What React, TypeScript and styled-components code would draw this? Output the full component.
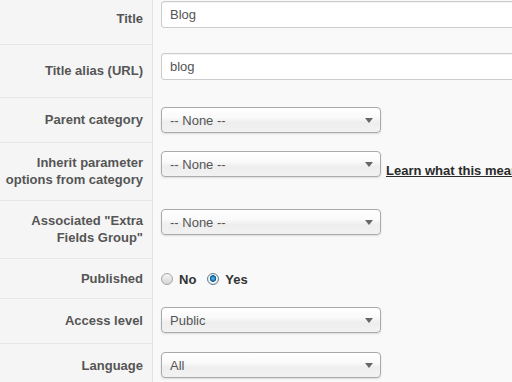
import styled, { createGlobalStyle } from 'styled-components';

const GlobalStyle = createGlobalStyle`
  html, body {
    margin: 0;
    padding: 0;
    background: #f9f9f9;
    overflow: hidden;
    font-family: "Liberation Sans", Arial, sans-serif;
  }
`;

const Table = styled.div`
  width: 512px;
  margin-top: -7px;
  overflow: hidden;
`;

const Row = styled.div<{ $h: number }>`
  display: grid;
  grid-template-columns: 153px 1fr;
  height: ${(p) => p.$h}px;
`;

const Label = styled.div`
  box-sizing: border-box;
  display: flex;
  align-items: center;
  justify-content: flex-end;
  text-align: right;
  padding: 0 9px 1px 0;
  background: #f5f5f5;
  border-right: 1px solid #e3e3e3;
  border-bottom: 1px solid #e6e6e6;
  color: #555;
  font-size: 13px;
  font-weight: bold;
  line-height: 17px;
`;

const Value = styled.div`
  display: flex;
  align-items: flex-start;
  padding: 8px 0 0 8px;
  min-width: 0;
  white-space: nowrap;
`;

const TextInput = styled.div`
  box-sizing: border-box;
  flex: 0 0 420px;
  height: 27px;
  padding: 0 8px;
  display: flex;
  align-items: center;
  background: #fff;
  border: 1px solid #ccc;
  border-radius: 3px;
  box-shadow: inset 0 1px 1px rgba(0, 0, 0, 0.05);
  color: #555;
  font-size: 13px;
`;

const Select = styled.div<{ $top?: number }>`
  position: relative;
  box-sizing: border-box;
  flex: 0 0 220px;
  height: 26px;
  margin-top: ${(p) => p.$top ?? 0}px;
  padding: 0 8px;
  display: flex;
  align-items: center;
  background: linear-gradient(#ffffff 0%, #fafafa 40%, #eeeeee 60%, #f2f2f2 100%);
  border: 1px solid #aaa;
  border-radius: 4px;
  box-shadow: 0 1px 2px rgba(0, 0, 0, 0.12);
  color: #555;
  font-size: 13px;
`;

const Arrow = styled.span`
  position: absolute;
  right: 7px;
  top: 10px;
  width: 0;
  height: 0;
  border-left: 4px solid transparent;
  border-right: 4px solid transparent;
  border-top: 5px solid #666;
`;

const HelpLink = styled.a`
  margin: 11px 0 0 5px;
  color: #2b2b2b;
  font-size: 13px;
  font-weight: bold;
  text-decoration: underline;
  line-height: 17px;
`;

const RadioGroup = styled.div`
  display: flex;
  align-items: center;
  height: 24px;
`;

const RadioOption = styled.label`
  display: flex;
  align-items: center;
  gap: 6px;
  margin-right: 11px;
  color: #333;
  font-size: 13px;
  font-weight: bold;
`;

const RadioDot = styled.span<{ $checked?: boolean }>`
  box-sizing: border-box;
  width: 12px;
  height: 12px;
  border-radius: 50%;
  border: 1px solid ${(p) => (p.$checked ? '#5d7f96' : '#a5a5a5')};
  background: ${(p) =>
    p.$checked
      ? 'radial-gradient(circle at 50% 45%, #6fc3f0 0, #1a7fbf 2px, #0c4f80 3px, #ffffff 3.6px, #e6e6e6 5px)'
      : 'linear-gradient(#f4f4f4, #d6d6d6)'};
`;

const rows = [
  { h: 52, label: ['Title'], kind: 'input', value: 'Blog' },
  { h: 53, label: ['Title alias (URL)'], kind: 'input', value: 'blog' },
  { h: 45, label: ['Parent category'], kind: 'select', value: '-- None --', top: 1 },
  { h: 58, label: ['Inherit parameter', 'options from category'], kind: 'select', value: '-- None --', link: true },
  { h: 58, label: ['Associated "Extra', 'Fields Group"'], kind: 'select', value: '-- None --' },
  { h: 40, label: ['Published'], kind: 'radio', value: '' },
  { h: 45, label: ['Access level'], kind: 'select', value: 'Public' },
  { h: 45, label: ['Language'], kind: 'select', value: 'All' },
];

export default function App() {
  return (
    <>
      <GlobalStyle />
      <Table>
        {rows.map((r) => (
          <Row key={r.label.join(' ')} $h={r.h}>
            <Label>
              <span>
                {r.label.map((line, i) => (
                  <span key={line}>
                    {i > 0 && <br />}
                    {line}
                  </span>
                ))}
              </span>
            </Label>
            <Value>
              {r.kind === 'input' && <TextInput>{r.value}</TextInput>}
              {r.kind === 'select' && (
                <Select $top={r.top}>
                  {r.value}
                  <Arrow />
                </Select>
              )}
              {r.link && <HelpLink href="#">Learn what this means</HelpLink>}
              {r.kind === 'radio' && (
                <RadioGroup>
                  <RadioOption>
                    <RadioDot />
                    No
                  </RadioOption>
                  <RadioOption>
                    <RadioDot $checked />
                    Yes
                  </RadioOption>
                </RadioGroup>
              )}
            </Value>
          </Row>
        ))}
      </Table>
    </>
  );
}
